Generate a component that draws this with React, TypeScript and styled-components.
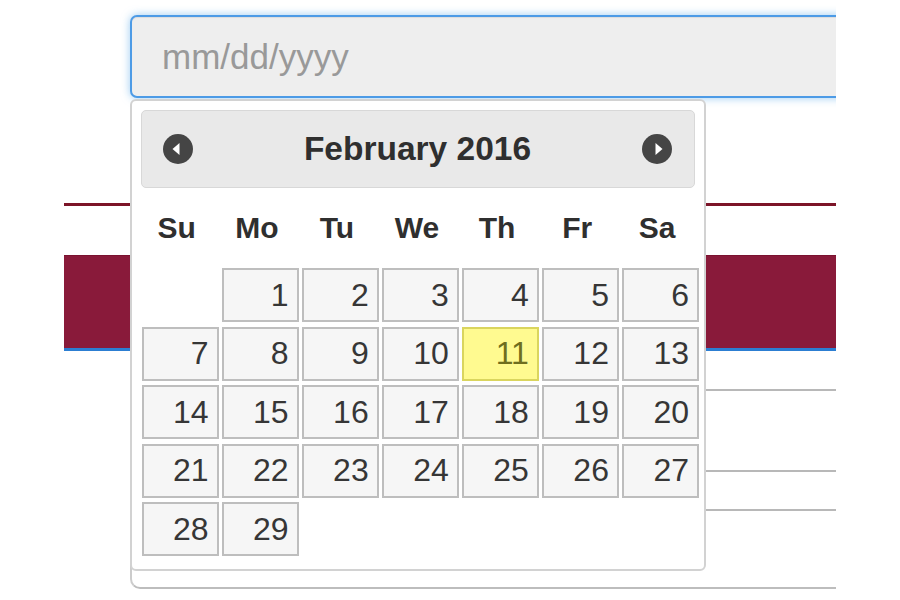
import React from "react";
import styled, { createGlobalStyle } from "styled-components";

const Global = createGlobalStyle`
  html, body { margin: 0; padding: 0; background: #ffffff; }
  body { font-family: "Liberation Sans", Arial, Helvetica, sans-serif; }
  * { box-sizing: border-box; }
`;

const Stage = styled.div`
  position: relative;
  width: 772px;
  height: 600px;
  margin-left: 64px;
  padding-top: 15px;
  overflow: hidden;
  display: flex;
  flex-direction: column;
`;

const InputBox = styled.div`
  margin-left: 66px;
  width: 760px;
  height: 83px;
  flex: none;
  display: flex;
  align-items: center;
  padding-left: 30px;
  background: #eeeeee;
  border: 2px solid #4d9be6;
  border-radius: 7px;
  box-shadow: inset 0 1px 1px rgba(0, 0, 0, 0.075), 0 0 9px rgba(102, 175, 233, 0.65);
`;

const Placeholder = styled.span`
  font-size: 35px;
  color: #999999;
  padding-top: 1px;
`;

const Rule = styled.div<{ $top: number; $h: number; $color: string }>`
  flex: none;
  margin-top: ${(p) => p.$top}px;
  height: ${(p) => p.$h}px;
  background: ${(p) => p.$color};
`;

const Band = styled.div`
  flex: none;
  margin-top: 49px;
  height: 96px;
  background: #891a3a;
  border-top: 1px solid #7a1230;
  border-bottom: 3px solid #2c7ed2;
`;

const Panel = styled.div`
  flex: none;
  margin-left: 66px;
  display: flex;
  flex-direction: column;
  border-left: 2px solid #cccccc;
  border-bottom: 2px solid #bdbdbd;
  border-bottom-left-radius: 10px;
`;

const PanelRow = styled.div<{ $h: number; $last?: boolean }>`
  height: ${(p) => p.$h}px;
  border-bottom: ${(p) => (p.$last ? "none" : "2px solid #b8b8b8")};
`;

const Popup = styled.div`
  position: absolute;
  left: 66px;
  top: 99px;
  width: 576px;
  background: #ffffff;
  border: 2px solid #d2d2d2;
  border-radius: 6px;
  padding: 9px 9px 13px 9px;
`;

const Header = styled.div`
  height: 78px;
  display: flex;
  align-items: center;
  padding: 0 22px 0 21px;
  background: #e9e9e9;
  border: 1px solid #d8d8d8;
  border-radius: 5px;
`;

const Title = styled.div`
  flex: 1;
  text-align: center;
  font-size: 33.5px;
  font-weight: bold;
  color: #2f2f2f;
`;

const NavIcon = styled.svg`
  width: 30px;
  height: 30px;
  flex: none;
  display: block;
`;

const WeekRow = styled.div`
  margin-left: 1px;
  width: 557px;
  height: 80px;
  display: grid;
  grid-template-columns: repeat(7, 1fr);
  column-gap: 3.5px;
  align-items: center;
`;

const WeekDay = styled.div`
  text-align: center;
  padding-right: 7px;
  font-size: 30px;
  font-weight: bold;
  color: #2f2f2f;
`;

const Days = styled.div`
  margin-left: 1px;
  width: 557px;
  display: grid;
  grid-template-columns: repeat(7, 1fr);
  grid-auto-rows: 54px;
  column-gap: 3.5px;
  row-gap: 4.5px;
`;

const Day = styled.div<{ $active?: boolean }>`
  display: flex;
  align-items: center;
  justify-content: flex-end;
  padding-right: 8px;
  font-size: 32px;
  background: ${(p) => (p.$active ? "#fffa90" : "#f6f6f6")};
  border: 2px solid ${(p) => (p.$active ? "#dad55e" : "#bebebe")};
  color: ${(p) => (p.$active ? "#6f6e1e" : "#363636")};
`;

const Blank = styled.div``;

const Prev = () => (
  <NavIcon viewBox="0 0 30 30">
    <circle cx="15" cy="15" r="15" fill="#454545" />
    <polygon points="9.5,15 16.5,9 16.5,21" fill="#ffffff" />
  </NavIcon>
);

const Next = () => (
  <NavIcon viewBox="0 0 30 30">
    <circle cx="15" cy="15" r="15" fill="#454545" />
    <polygon points="20.5,15 13.5,9 13.5,21" fill="#ffffff" />
  </NavIcon>
);

const weekdays = ["Su", "Mo", "Tu", "We", "Th", "Fr", "Sa"];
const days = Array.from({ length: 29 }, (_, i) => i + 1);

export default function App() {
  return (
    <>
      <Global />
      <Stage>
        <InputBox>
          <Placeholder>mm/dd/yyyy</Placeholder>
        </InputBox>
        <Rule $top={105} $h={3} $color="#7c1428" />
        <Band />
        <Panel>
          <PanelRow $h={40} />
          <PanelRow $h={81} />
          <PanelRow $h={39} />
          <PanelRow $h={76} $last />
        </Panel>
        <Popup>
          <Header>
            <Prev />
            <Title>February 2016</Title>
            <Next />
          </Header>
          <WeekRow>
            {weekdays.map((d) => (
              <WeekDay key={d}>{d}</WeekDay>
            ))}
          </WeekRow>
          <Days>
            <Blank />
            {days.map((d) => (
              <Day key={d} $active={d === 11}>
                {d}
              </Day>
            ))}
          </Days>
        </Popup>
      </Stage>
    </>
  );
}
